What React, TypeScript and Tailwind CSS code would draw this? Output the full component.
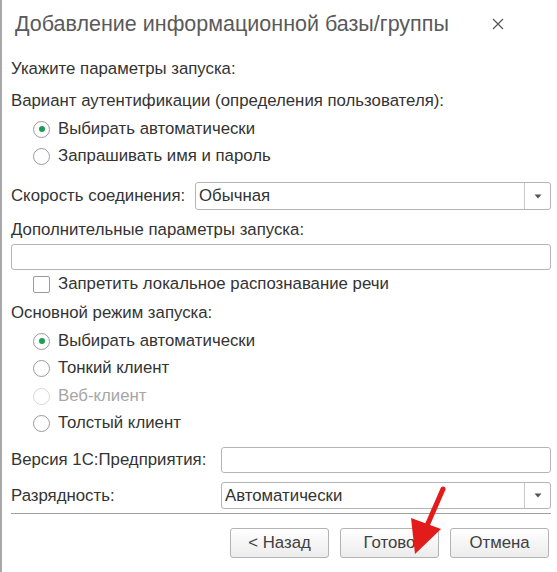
import React from 'react';

const font = { fontFamily: '"Liberation Sans", Arial, sans-serif' };

function Radio({ checked = false, disabled = false, label }: { checked?: boolean; disabled?: boolean; label: string }) {
  return (
    <div className="flex items-center h-[22px] pl-[22px] gap-[8px]">
      <span
        className={
          'w-[17px] h-[17px] rounded-full border bg-white flex items-center justify-center ' +
          (disabled ? 'border-[#d6d6d6]' : 'border-[#9b9b9b]')
        }
      >
        {checked && <span className="w-[6px] h-[6px] rounded-full bg-[#1a9f50]" />}
      </span>
      <span className={disabled ? 'text-[#a6a6a6]' : 'text-[#333333]'}>{label}</span>
    </div>
  );
}

function Select({ value }: { value: string }) {
  return (
    <div className="flex-1 h-full flex border border-[#b5b5b5] rounded-[3px] bg-white">
      <div className="flex-1 flex items-center pl-[3px] text-[#333333]">{value}</div>
      <div className="w-[26px] border-l border-[#c9c9c9] flex items-center justify-center">
        <svg width="8" height="5" viewBox="0 0 8 5">
          <path d="M0.5 0.5 L7.5 0.5 L4 4.5 Z" fill="#555" />
        </svg>
      </div>
    </div>
  );
}

function Button({ children }: { children: React.ReactNode }) {
  return (
    <button className="w-[99px] h-[30px] rounded-[3px] border border-[#b3b3b3] bg-gradient-to-b from-white to-[#ececec] text-[16.8px] text-[#404040] flex items-center justify-center">
      {children}
    </button>
  );
}

export default function App() {
  return (
    <div
      className="relative w-[557px] h-[572px] bg-white border-l-2 border-[#a8a8a8] pl-[9px] pr-[6px] text-[16.8px] text-[#333333]"
      style={font}
    >
      {/* header */}
      <div className="h-[48px] flex items-center justify-between">
        <span className="pl-[4px] text-[21.5px] text-[#5a5a5a]">Добавление информационной базы/группы</span>
        <svg width="12" height="12" viewBox="0 0 12 12" className="mr-[47px]">
          <path d="M1 1 L11 11 M11 1 L1 11" stroke="#555" strokeWidth="1.2" />
        </svg>
      </div>

      <div className="mt-[10px] h-[22px] flex items-center">Укажите параметры запуска:</div>
      <div className="mt-[10px] h-[22px] flex items-center">Вариант аутентификации (определения пользователя):</div>
      <div className="mt-[6px]">
        <Radio checked label="Выбирать автоматически" />
      </div>
      <div className="mt-[5px]">
        <Radio label="Запрашивать имя и пароль" />
      </div>

      <div className="mt-[15px] h-[28px] flex items-center">
        <span className="w-[184px]">Скорость соединения:</span>
        <Select value="Обычная" />
      </div>

      <div className="mt-[9px] h-[22px] flex items-center">Дополнительные параметры запуска:</div>
      <div className="mt-[3px] h-[26px] border border-[#b5b5b5] rounded-[3px]" />

      <div className="mt-[3px] h-[22px] flex items-center pl-[22px] gap-[8px]">
        <span className="w-[17px] h-[17px] border border-[#9b9b9b] rounded-[2px] bg-white" />
        <span>Запретить локальное распознавание речи</span>
      </div>

      <div className="mt-[7px] h-[22px] flex items-center">Основной режим запуска:</div>
      <div className="mt-[6px]">
        <Radio checked label="Выбирать автоматически" />
      </div>
      <div className="mt-[5px]">
        <Radio label="Тонкий клиент" />
      </div>
      <div className="mt-[6px]">
        <Radio disabled label="Веб-клиент" />
      </div>
      <div className="mt-[5px]">
        <Radio label="Толстый клиент" />
      </div>

      <div className="mt-[13px] h-[26px] flex items-center">
        <span className="w-[210px]">Версия 1С:Предприятия:</span>
        <div className="flex-1 h-full border border-[#b5b5b5] rounded-[3px]" />
      </div>
      <div className="mt-[9px] h-[27px] flex items-center">
        <span className="w-[210px]">Разрядность:</span>
        <Select value="Автоматически" />
      </div>

      <div className="mt-[4px] h-px bg-[#a0a0a0]" />

      <div className="mt-[14px] flex justify-end gap-[11px] pr-[2px]">
        <Button>&lt; Назад</Button>
        <Button>Готово</Button>
        <Button>Отмена</Button>
      </div>

      {/* pointer arrow over the buttons */}
      <svg className="absolute left-0 top-0 pointer-events-none" width="557" height="572">
        <line x1="441" y1="489" x2="424" y2="528" stroke="#e21b1b" strokeWidth="5" strokeLinecap="round" />
        <polygon points="409,518 439,529 413,554" fill="#e21b1b" />
      </svg>
    </div>
  );
}
